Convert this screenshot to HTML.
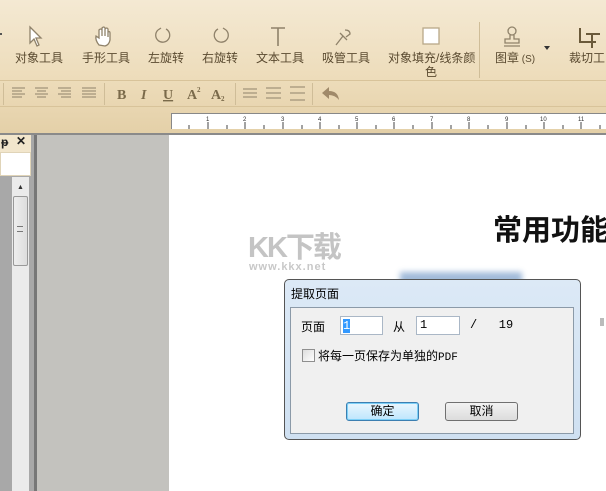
<!DOCTYPE html><html><head><meta charset="utf-8"><style>
*{margin:0;padding:0;box-sizing:border-box}
body{width:606px;height:491px;overflow:hidden;position:relative;background:#fff;font-family:"Liberation Sans","Noto Sans CJK SC",sans-serif;font-size:12px}
.a{position:absolute}
.tb{left:0;top:0;width:606px;height:133px;background:linear-gradient(#f4e9d3,#eddcba 60%,#e4d0a8)}
.lbl{position:absolute;top:49px;color:#5a4a30;font-size:12px;white-space:nowrap}
</style></head><body>
<div class="a tb"></div>
<div class="a" style="left:0;top:80px;width:606px;height:1px;background:#d8c39a"></div>
<div class="a" style="left:0;top:106px;width:606px;height:1px;background:#d8c39a"></div>
<svg class="a" style="left:0;top:0" width="606" height="80">
<g fill="none" stroke="#8f826a" stroke-width="1.3">
<path d="M30 27 L30 43 L34 39 L37 46 L39 45 L36 38 L41 38 Z" fill="#fff"/>
<path d="M99 45 Q95 40 96 36 L99 38 L99 30 Q101 28 102 30 L102 36 L102 28 Q104 26 105 28 L105 36 L105 29 Q107 27 108 29 L108 37 L108 32 Q110 31 110 33 L110 40 Q109 45 105 46 Z" fill="#fff"/>
<path d="M158 30 A7 7 0 1 0 166 29" /><path d="M158 30 L161 28"/>
<path d="M226 30 A7 7 0 1 1 218 29"/><path d="M226 30 L223 28"/>
<path d="M271 28 H285 M278 28 V46" stroke-width="1.6"/>
<path d="M336 45 L343 36 M340 33 L347 40 M345 30 Q350 30 350 34 L346 37" />
<rect x="423" y="28" width="16" height="16" fill="#fff" stroke="#b8a888"/>
<circle cx="512" cy="31" r="4"/><path d="M510 35 V39 H505 V43 H519 V39 H514 V35 M504 46 H520"/>
<path d="M580 28 V42 H596 M586 34 H600 M592 34 V48" stroke="#6a5a3a" stroke-width="2"/>
</g>
<path d="M544 46 L550 46 L547 50Z" fill="#333"/>
<rect x="479" y="22" width="1" height="56" fill="#cfbd98"/>
<rect x="0" y="33" width="2" height="2" fill="#555"/>
</svg>
<div class="lbl" style="left:15px">对象工具</div>
<div class="lbl" style="left:82px">手形工具</div>
<div class="lbl" style="left:148px">左旋转</div>
<div class="lbl" style="left:202px">右旋转</div>
<div class="lbl" style="left:256px">文本工具</div>
<div class="lbl" style="left:322px">吸管工具</div>
<div class="lbl" style="left:388px">对象填充/线条颜</div>
<div class="lbl" style="left:425px;top:63px">色</div>
<div class="lbl" style="left:495px">图章<span style="font-size:10px"> (S)</span></div>
<div class="lbl" style="left:569px">裁切工</div>
<svg class="a" style="left:0;top:80px" width="606" height="27">
<g stroke="#8f826a" stroke-width="1">
<path d="M12 8 H25 M12 11 H22 M12 14 H25 M12 17 H22"/>
<path d="M35 8 H48 M37 11 H46 M35 14 H48 M37 17 H46"/>
<path d="M58 8 H71 M61 11 H71 M58 14 H71 M61 17 H71"/>
<path d="M82 8 H96 M82 11 H96 M82 14 H96 M82 17 H96"/>
<path d="M243 9 H257 M243 13 H257 M243 17 H257"/>
<path d="M266 8 H281 M266 13 H281 M266 18 H281"/>
<path d="M290 7 H305 M290 13 H305 M290 20 H305"/>
</g>
<g fill="#cfbd98"><rect x="3" y="3" width="1" height="22"/><rect x="104" y="3" width="1" height="22"/><rect x="235" y="3" width="1" height="22"/><rect x="312" y="3" width="1" height="22"/></g>
<path d="M322 13 L329 7 V11 Q338 11 339 20 Q335 15 329 15 V19 Z" fill="#a08a6a"/>
<g font-family="Liberation Serif" font-weight="bold" fill="#7a6a4a" font-size="14">
<text x="117" y="19">B</text><text x="141" y="19" font-style="italic">I</text><text x="163" y="19" text-decoration="underline">U</text><text x="187" y="19">A</text><text x="197" y="12" font-size="7">2</text><text x="211" y="19">A</text><text x="221" y="21" font-size="7">2</text></g>
</svg>
<div class="a" style="left:171px;top:113px;width:435px;height:16px;background:#fff;border-top:1px solid #888;border-left:1px solid #888"></div>
<svg class="a" style="left:171px;top:113px" width="435" height="16">
<g stroke="#444"><path d="M18 12V16 M37 9V16 M56 12V16 M74 9V16 M93 12V16 M112 9V16 M131 12V16 M149 9V16 M168 12V16 M186 9V16 M205 12V16 M223 9V16 M242 12V16 M261 9V16 M280 12V16 M298 9V16 M317 12V16 M336 9V16 M355 12V16 M373 9V16 M392 12V16 M410 9V16 M429 12V16"/></g>
<g font-size="6" fill="#333"><text x="35" y="8">1</text><text x="72" y="8">2</text><text x="110" y="8">3</text><text x="147" y="8">4</text><text x="184" y="8">5</text><text x="221" y="8">6</text><text x="259" y="8">7</text><text x="296" y="8">8</text><text x="334" y="8">9</text><text x="369" y="8">10</text><text x="407" y="8">11</text></g>
</svg>
<div class="a" style="left:0;top:133px;width:606px;height:2px;background:#8a8a8a"></div>
<div class="a" style="left:0;top:135px;width:34px;height:356px;background:#a8a8a8"></div>
<div class="a" style="left:0;top:135px;width:31px;height:17px;background:#f2e6cc;font-size:12px;font-weight:bold;color:#222"><span style="position:absolute;left:1px;top:0">ᵽ</span><span style="position:absolute;left:16px;top:-1px">✕</span></div>
<div class="a" style="left:0;top:152px;width:31px;height:24px;background:#fff;border:1px solid #e0d4b8"></div>
<div class="a" style="left:12px;top:177px;width:17px;height:314px;background:#ebebeb"></div>
<div class="a" style="left:13px;top:196px;width:15px;height:70px;background:linear-gradient(90deg,#eee,#ddd);border:1px solid #999;border-radius:2px"></div>
<div class="a" style="left:17px;top:184px;font-size:7px;color:#333">▲</div>
<div class="a" style="left:17px;top:226px;width:6px;height:6px;border-top:1px solid #777;border-bottom:1px solid #777"></div>
<div class="a" style="left:34px;top:135px;width:3px;height:356px;background:#777"></div>
<div class="a" style="left:37px;top:135px;width:132px;height:356px;background:#c3c2be"></div>
<div class="a" style="left:493px;top:207px;font-size:29px;font-weight:bold;color:#111;white-space:nowrap">常用功能</div>
<div class="a" style="left:248px;top:224px;font-size:29px;font-weight:bold;color:#c4c4c4;letter-spacing:-2px">KK下载</div>
<div class="a" style="left:249px;top:261px;font-size:11px;font-weight:bold;color:#c8c8c8;letter-spacing:1px">www.kkx.net</div>
<div class="a" style="left:400px;top:272px;width:122px;height:14px;background:#8aaad0;filter:blur(3px);opacity:.8"></div>
<div class="a" style="left:600px;top:318px;width:4px;height:8px;background:#bbb"></div>
<div class="a" style="left:284px;top:279px;width:297px;height:161px;background:linear-gradient(#dce9f6,#cfe0f1);border:1px solid #555;border-radius:5px"></div>
<div class="a" style="left:291px;top:285px;font-size:12px;color:#000">提取页面</div>
<div class="a" style="left:290px;top:307px;width:284px;height:127px;background:#f0f0f0;border:1px solid #8b9aa8"></div>
<div class="a" style="left:301px;top:318px">页面</div>
<div class="a" style="left:340px;top:316px;width:43px;height:19px;background:#fff;border:1px solid #aab7c6;padding:1px 2px"><span style="background:#3399ff;color:#fff;font-family:Liberation Mono">1</span></div>
<div class="a" style="left:393px;top:318px">从</div>
<div class="a" style="left:416px;top:316px;width:44px;height:19px;background:#fff;border:1px solid #aab7c6;padding:1px 3px;font-family:Liberation Mono">1</div>
<div class="a" style="left:470px;top:318px;font-family:Liberation Mono">/&nbsp;&nbsp;&nbsp;19</div>
<div class="a" style="left:302px;top:349px;width:13px;height:13px;border:1px solid #8f8f8f;background:linear-gradient(135deg,#ddd,#fff)"></div>
<div class="a" style="left:318px;top:347px">将每一页保存为单独的<span style="font-family:Liberation Mono;font-size:11px">PDF</span></div>
<div class="a" style="left:346px;top:402px;width:73px;height:19px;border:1px solid #3c7fb1;border-radius:3px;background:linear-gradient(#eaf6fd,#bee6fd);text-align:center;line-height:17px;box-shadow:inset 0 0 0 1px #7dd0f7">确定</div>
<div class="a" style="left:445px;top:402px;width:73px;height:19px;border:1px solid #707070;border-radius:3px;background:linear-gradient(#f2f2f2,#dcdcdc);text-align:center;line-height:17px">取消</div>
</body></html>
